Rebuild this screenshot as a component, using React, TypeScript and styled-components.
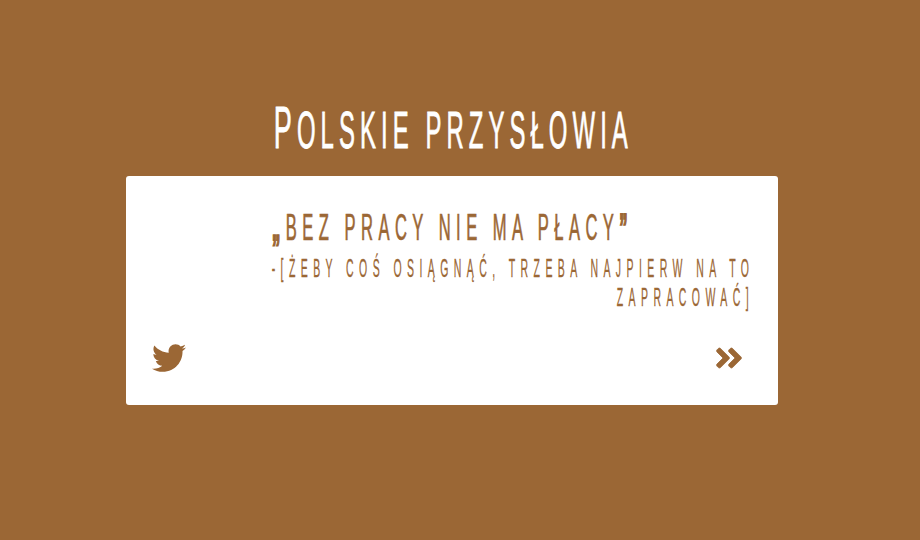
import React from "react";
import styled, { createGlobalStyle } from "styled-components";
import { FaTwitter, FaAngleDoubleRight } from "react-icons/fa";

const brown = "#9b6735";
const stack = `"Liberation Sans Narrow", "Liberation Sans", sans-serif`;

const Global = createGlobalStyle`
  html, body { margin: 0; padding: 0; background: ${brown}; }
  body { width: 920px; height: 540px; overflow: hidden; font-family: ${stack}; }
`;

const Page = styled.main`
  width: 920px;
  height: 540px;
  padding: 97px 142px 0 126px;
  box-sizing: border-box;
  display: flex;
  flex-direction: column;
`;

const TitleRow = styled.header`
  height: 79px;
  padding-left: 3px;
  display: flex;
  justify-content: center;
`;

const Title = styled.h1`
  margin: 0;
  flex: none;
  height: 62px;
  display: block;
  font-size: 52px;
  line-height: 62px;
  font-weight: 400;
  color: #fff;
  white-space: nowrap;
  letter-spacing: 11px;
  text-transform: uppercase;
  -webkit-text-stroke: 0.8px #fff;
  transform: scaleX(0.46);
  &::first-letter { font-size: 59px; }
`;

const Card = styled.section`
  height: 229px;
  background: #fff;
  border-radius: 3px;
  padding: 32px 24px 0 26px;
  box-sizing: border-box;
  color: ${brown};
  display: flex;
  flex-direction: column;
`;

const QuoteRow = styled.div`
  height: 40px;
  display: flex;
  justify-content: center;
`;

const Quote = styled.p`
  margin: 0;
  flex: none;
  font-size: 36px;
  line-height: 40px;
  white-space: nowrap;
  text-transform: uppercase;
  letter-spacing: 11.9px;
  -webkit-text-stroke: 0.7px ${brown};
  transform: scaleX(0.46);
`;

const QuoteMark = styled.span`
  font-weight: 700;
  -webkit-text-stroke: 2px ${brown};
`;

const Author = styled.div`
  margin-top: 6px;
  height: 88px;
  display: flex;
  flex-direction: column;
  align-items: flex-end;
`;

const AuthorLine = styled.p`
  margin: 0;
  flex: none;
  font-size: 25px;
  line-height: 29px;
  white-space: nowrap;
  text-transform: uppercase;
  letter-spacing: 12.9px;
  -webkit-text-stroke: 0.3px ${brown};
  transform: scaleX(0.42);
  transform-origin: right center;
`;

const Footer = styled.footer`
  display: flex;
  justify-content: space-between;
  align-items: center;
  height: 32px;
  padding-right: 9px;
`;

const TwitterLink = styled.a`
  display: flex;
  color: ${brown};
  font-size: 34px;
`;

const NextButton = styled.button`
  display: flex;
  border: 0;
  padding: 0;
  background: none;
  color: ${brown};
  font-size: 32px;
  svg { stroke-width: 12; }
`;

export default function App() {
  return (
    <>
      <Global />
      <Page>
        <TitleRow>
          <Title>Polskie przysłowia</Title>
        </TitleRow>
        <Card>
          <QuoteRow>
            <Quote><QuoteMark>„</QuoteMark>Bez pracy nie ma płacy<QuoteMark>”</QuoteMark></Quote>
          </QuoteRow>
          <Author>
            <AuthorLine>-[żeby coś osiągnąć, trzeba najpierw na to</AuthorLine>
            <AuthorLine>zapracować]</AuthorLine>
          </Author>
          <Footer>
            <TwitterLink aria-label="Twitter"><FaTwitter /></TwitterLink>
            <NextButton aria-label="Następne"><FaAngleDoubleRight /></NextButton>
          </Footer>
        </Card>
      </Page>
    </>
  );
}
